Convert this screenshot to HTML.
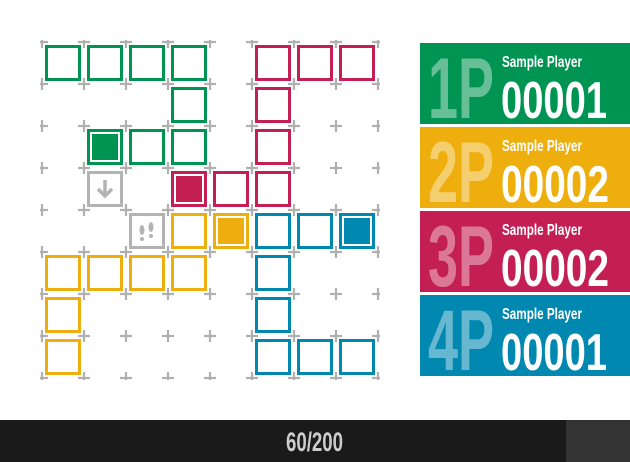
<!DOCTYPE html>
<html><head><meta charset="utf-8"><style>
html,body{margin:0;padding:0;background:#fff;width:630px;height:462px;overflow:hidden}
svg{display:block}
</style></head><body>
<svg width="630" height="462" viewBox="0 0 630 462" xmlns="http://www.w3.org/2000/svg" font-family="'Liberation Sans Narrow','Liberation Sans',sans-serif">
<defs>
<pattern id="cr" patternUnits="userSpaceOnUse" x="21" y="21" width="42" height="42">
<path d="M15 21H27M21 15V27" stroke="#b0b0b0" stroke-width="2.2"/>
</pattern>
</defs>
<rect x="40" y="40" width="340" height="340" fill="url(#cr)"/>
<g fill="#fff" stroke-width="3">
<g stroke="#009452">
<rect x="46.5" y="46.5" width="33" height="33"/><rect x="88.5" y="46.5" width="33" height="33"/><rect x="130.5" y="46.5" width="33" height="33"/><rect x="172.5" y="46.5" width="33" height="33"/>
<rect x="172.5" y="88.5" width="33" height="33"/>
<rect x="88.5" y="130.5" width="33" height="33"/><rect x="130.5" y="130.5" width="33" height="33"/><rect x="172.5" y="130.5" width="33" height="33"/>
</g>
<g stroke="#c41f55">
<rect x="256.5" y="46.5" width="33" height="33"/><rect x="298.5" y="46.5" width="33" height="33"/><rect x="340.5" y="46.5" width="33" height="33"/>
<rect x="256.5" y="88.5" width="33" height="33"/><rect x="256.5" y="130.5" width="33" height="33"/>
<rect x="172.5" y="172.5" width="33" height="33"/><rect x="214.5" y="172.5" width="33" height="33"/><rect x="256.5" y="172.5" width="33" height="33"/>
</g>
<g stroke="#eeaf0e">
<rect x="172.5" y="214.5" width="33" height="33"/><rect x="214.5" y="214.5" width="33" height="33"/>
<rect x="46.5" y="256.5" width="33" height="33"/><rect x="88.5" y="256.5" width="33" height="33"/><rect x="130.5" y="256.5" width="33" height="33"/><rect x="172.5" y="256.5" width="33" height="33"/>
<rect x="46.5" y="298.5" width="33" height="33"/><rect x="46.5" y="340.5" width="33" height="33"/>
</g>
<g stroke="#0088b0">
<rect x="256.5" y="214.5" width="33" height="33"/><rect x="298.5" y="214.5" width="33" height="33"/><rect x="340.5" y="214.5" width="33" height="33"/>
<rect x="256.5" y="256.5" width="33" height="33"/><rect x="256.5" y="298.5" width="33" height="33"/>
<rect x="256.5" y="340.5" width="33" height="33"/><rect x="298.5" y="340.5" width="33" height="33"/><rect x="340.5" y="340.5" width="33" height="33"/>
</g>
<g stroke="#b3b3b3">
<rect x="88.5" y="172.5" width="33" height="33"/><rect x="130.5" y="214.5" width="33" height="33"/>
</g>
</g>
<rect x="92" y="134" width="26" height="26" fill="#009452"/>
<rect x="176" y="176" width="26" height="26" fill="#c41f55"/>
<rect x="218" y="218" width="26" height="26" fill="#eeaf0e"/>
<rect x="344" y="218" width="26" height="26" fill="#0088b0"/>
<path d="M105 180V196M98 189L105 196L112 189" fill="none" stroke="#b3b3b3" stroke-width="3.5"/>
<g fill="#b3b3b3">
<ellipse cx="142" cy="230" rx="2.5" ry="5"/><circle cx="142" cy="239" r="2"/>
<ellipse cx="151" cy="227" rx="2.5" ry="5"/><circle cx="151" cy="236" r="2"/>
</g>
<rect x="420" y="43" width="210" height="81" fill="#009452"/>
<rect x="420" y="127" width="210" height="81" fill="#eeaf0e"/>
<rect x="420" y="211" width="210" height="81" fill="#c41f55"/>
<rect x="420" y="295" width="210" height="81" fill="#0088b0"/>
<g fill="#fff" fill-opacity="0.4" font-size="86" font-weight="bold">
<text x="428" y="118" textLength="66" lengthAdjust="spacingAndGlyphs">1P</text>
<text x="428" y="202" textLength="66" lengthAdjust="spacingAndGlyphs">2P</text>
<text x="428" y="286" textLength="66" lengthAdjust="spacingAndGlyphs">3P</text>
<text x="428" y="370" textLength="66" lengthAdjust="spacingAndGlyphs">4P</text>
</g>
<g fill="#fff" font-size="16" font-weight="bold">
<text x="502" y="67" textLength="80" lengthAdjust="spacingAndGlyphs">Sample Player</text>
<text x="502" y="151" textLength="80" lengthAdjust="spacingAndGlyphs">Sample Player</text>
<text x="502" y="235" textLength="80" lengthAdjust="spacingAndGlyphs">Sample Player</text>
<text x="502" y="319" textLength="80" lengthAdjust="spacingAndGlyphs">Sample Player</text>
</g>
<g fill="#fff" font-size="52" font-weight="bold">
<text x="501" y="118" textLength="106" lengthAdjust="spacingAndGlyphs">00001</text>
<text x="501" y="202" textLength="108" lengthAdjust="spacingAndGlyphs">00002</text>
<text x="501" y="286" textLength="108" lengthAdjust="spacingAndGlyphs">00002</text>
<text x="501" y="370" textLength="106" lengthAdjust="spacingAndGlyphs">00001</text>
</g>
<rect x="0" y="420" width="630" height="42" fill="#1a1a1a"/>
<rect x="566" y="420" width="64" height="42" fill="#333"/>
<text x="286" y="451" font-size="27" font-weight="bold" fill="#ccc" textLength="57" lengthAdjust="spacingAndGlyphs">60/200</text>
</svg>
</body></html>
